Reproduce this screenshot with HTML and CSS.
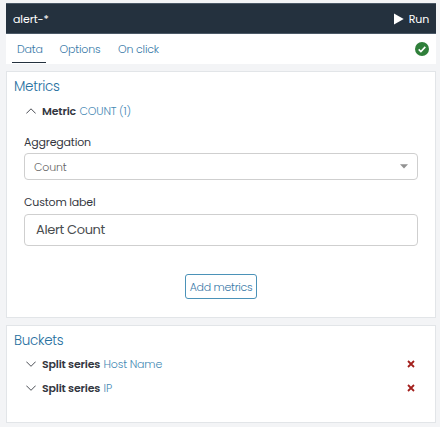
FILE: index.html
```
<!DOCTYPE html>
<html lang="en">
<head>
<meta charset="utf-8">
<title>Visualization editor</title>
<link rel="stylesheet" href="styles.css">
</head>
<body>
<main class="editor">
  <header class="topbar">
    <span class="source">alert-*</span>
    <button class="run"><svg width="10" height="12" viewBox="0 0 10 12"><path d="M0 .5 9.7 6 0 11.5z" fill="#fff"/></svg><span>Run</span></button>
  </header>
  <nav class="tabs">
    <a class="tab active">Data</a>
    <a class="tab">Options</a>
    <a class="tab">On click</a>
    <svg class="status" width="14" height="14" viewBox="0 0 14 14"><circle cx="7" cy="7" r="7" fill="#2f7f3a"/><path d="m3.7 7.4 2.2 2.1 4.4-4.6" fill="none" stroke="#fff" stroke-width="1.6"/></svg>
  </nav>
  <section class="panel metrics">
    <h2>Metrics</h2>
    <div class="row">
      <svg class="chevron" width="10" height="6" viewBox="0 0 10 6"><path d="M.3 5.5 5 .8l4.7 4.7"/></svg>
      <b>Metric</b><span class="value">COUNT (1)</span>
    </div>
    <label class="label l-agg">Aggregation</label>
    <div class="select"><span>Count</span><svg width="8" height="5" viewBox="0 0 8 5"><path d="M0 .3h8L4 4.6z" fill="#929292"/></svg></div>
    <label class="label l-custom">Custom label</label>
    <div class="input"><span>Alert Count</span></div>
    <button class="add">Add metrics</button>
  </section>
  <section class="panel buckets">
    <h2>Buckets</h2>
    <div class="row">
      <svg class="chevron" width="10" height="6" viewBox="0 0 10 6"><path d="M.3.6 5 5.3 9.7.6"/></svg>
      <b>Split series</b><span class="value">Host Name</span>
      <svg class="remove" width="8" height="8" viewBox="0 0 8 8"><path d="M1 1l6 6M7 1L1 7"/></svg>
    </div>
    <div class="row second">
      <svg class="chevron" width="10" height="6" viewBox="0 0 10 6"><path d="M.3.6 5 5.3 9.7.6"/></svg>
      <b>Split series</b><span class="value">IP</span>
      <svg class="remove" width="8" height="8" viewBox="0 0 8 8"><path d="M1 1l6 6M7 1L1 7"/></svg>
    </div>
  </section>
</main>
</body>
</html>
```
FILE: styles.css
```
* { box-sizing: border-box; }
body {
  margin: 0;
  height: 427px;
  overflow: hidden;
  background: #f3f4f6;
  color: #343741;
  font: 300 11px/16px Poppins, Inter, sans-serif;
  letter-spacing: -.18px;
  white-space: nowrap;
}
button { margin: 0; padding: 0; border: 0; background: none; font: inherit; letter-spacing: inherit; }
svg { flex: none; display: block; }
.editor { padding: 3px 4px 0 6px; }
.topbar {
  display: flex;
  justify-content: space-between;
  height: 31px;
  padding: 7px 7px 0;
  background: #24313e;
  border-top: 1px solid #4b5967;
  border-bottom: 1px solid #4b5967;
  color: #fff;
  font-weight: 400;
}
.source { letter-spacing: -.1px; }
.run { display: flex; align-items: center; gap: 5px; height: 16px; color: #fff; }
.tabs {
  display: flex;
  height: 30px;
  padding: 0 7px 0 6px;
  background: #fff;
}
.tab { height: 29px; padding: 7px 4px 0 5px; margin-right: 8.5px; color: #3778a7; }
.tab.active { width: 34px; border-bottom: 1px solid #24313e; }
.status { margin: 8px 0 0 auto; }
.panel {
  display: flex;
  flex-direction: column;
  margin-top: 7px;
  padding: 0 17px;
  border: 1px solid #e2e5e8;
  background: #fff;
}
.metrics { height: 247px; }
.buckets { height: 98px; }
h2 {
  margin: 5px 0 0 -10px;
  font-size: 13.5px;
  line-height: 20px;
  font-weight: 300;
  letter-spacing: -.3px;
  color: #27709f;
}
.row { display: flex; align-items: center; height: 16px; margin-top: 6px; }
.buckets .row { margin-top: 5px; }
.buckets .second { margin-top: 8px; }
.chevron { margin: 0 6px 0 2px; fill: none; stroke: #4b4e55; stroke-width: 1; }
.row b { font-weight: 600; margin-right: 3.5px; }
.value { color: #4589b4; }
.remove { margin: 0 3px 0 auto; fill: none; stroke: #a3201d; stroke-width: 1.8; }
.label { height: 16px; font-weight: 400; }
.l-agg { margin-top: 15px; }
.l-custom { margin-top: 14px; }
.select, .input {
  display: flex;
  align-items: center;
  border: 1px solid #cfcfcf;
  border-radius: 4px;
}
.select { height: 27px; margin-top: 3px; padding: 0 9px; justify-content: space-between; color: #666; }
.input { height: 32px; margin-top: 4px; padding: 0 11px; font-size: 13px; letter-spacing: -.35px; font-weight: 400; color: #4a4d50; }
.add {
  align-self: center;
  width: 72px;
  height: 25px;
  margin-top: 28px;
  border: 1px solid #4b92b8;
  border-radius: 3px;
  color: #3778a7;
  letter-spacing: -.3px;
}
```
